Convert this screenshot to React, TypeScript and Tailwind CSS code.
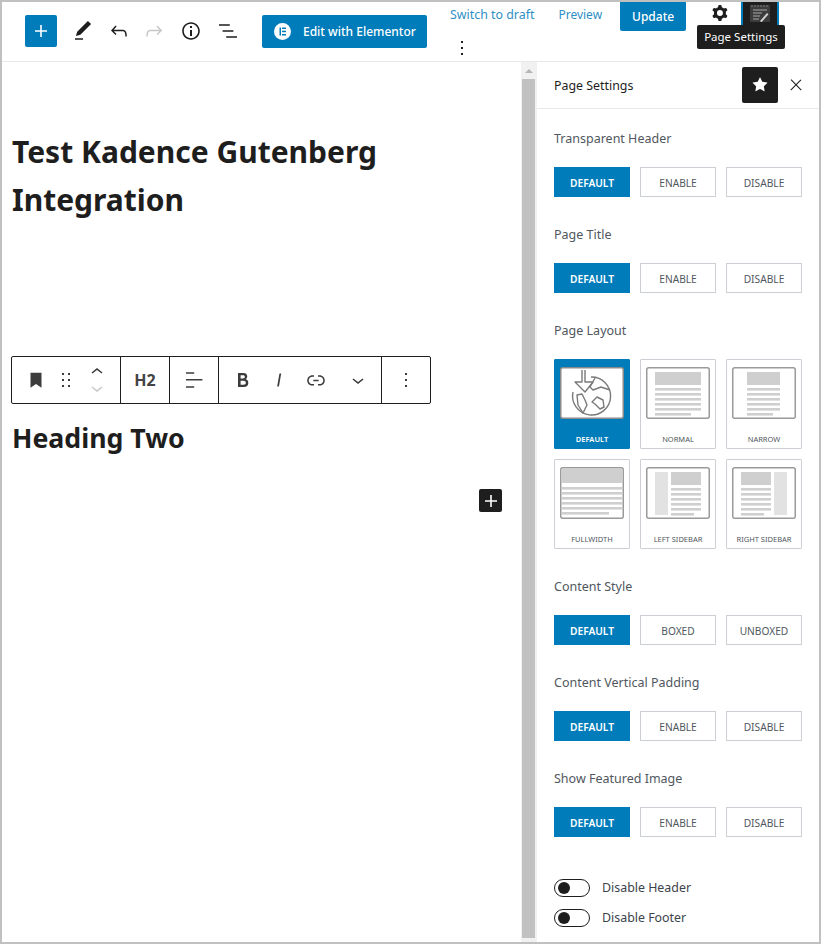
import React from 'react';

const icons = {
  plus: 'M18 11.2h-5.2V6h-1.6v5.2H6v1.6h5.2V18h1.6v-5.2H18z',
  edit: 'M20.1 5.1L16.9 2 6.2 12.7l-1.3 4.4 4.5-1.3L20.1 5.1zM4 20.8h8v-1.5H4v1.5z',
  undo: 'M18.3 11.7c-.6-.6-1.4-.9-2.3-.9H6.7l2.9-3.3-1.1-1-4.5 5L8.5 16l1-1-2.7-2.7H16c.5 0 .9.2 1.3.5 1 1 1 3.4 1 4.5v.3h1.5v-.2c0-1.5 0-4.3-1.5-5.7z',
  redo: 'M15.6 6.5l-1.1 1 2.9 3.3H8c-.9 0-1.7.3-2.3.9-1.4 1.5-1.4 4.2-1.4 5.6v.2h1.5v-.3c0-1.1 0-3.5 1-4.5.3-.3.7-.5 1.3-.5h9.2L14.5 15l1.1 1.1 4.6-4.6-4.6-5z',
  info: 'M12 3.2c-4.8 0-8.8 3.9-8.8 8.8 0 4.8 3.9 8.8 8.8 8.8 4.8 0 8.8-3.9 8.8-8.8 0-4.8-4-8.8-8.8-8.8zm0 16c-4 0-7.2-3.3-7.2-7.2C4.8 8 8 4.8 12 4.8s7.2 3.3 7.2 7.2c0 4-3.2 7.2-7.2 7.2zM11 17h2v-6h-2v6zm0-8h2V7h-2v2z',
  list: 'M13.8 5.2H3v1.5h10.8V5.2zm-3.6 12v1.5H21v-1.5H10.2zm7.2-6H6.6v1.5h10.8v-1.5z',
  more: 'M13 19h-2v-2h2v2zm0-6h-2v-2h2v2zm0-6h-2V5h2v2z',
  bookmark: 'M6 4h12v16.5l-6-4.2-6 4.2z',
  drag: 'M8 7h2V5H8v2zm0 6h2v-2H8v2zm0 6h2v-2H8v2zm6-14v2h2V5h-2zm0 8h2v-2h-2v2zm0 6h2v-2h-2v2z',
  up: 'M6.5 12.4L12 8l5.5 4.4-.9 1.2L12 10l-4.5 3.6-1-1.2z',
  down: 'M17.5 11.6L12 16l-5.5-4.4.9-1.2L12 14l4.5-3.6 1 1.2z',
  align: 'M4 19.8h8.2v-1.5H4v1.5zm0-15.6v1.5h8.2V4.2H4zm0 8.3h16.4V11H4z',
  bold: 'M14.7 11.3c1-.6 1.5-1.6 1.5-3 0-2.3-1.3-3.4-4-3.4H7v14h5.8c1.4 0 2.5-.3 3.3-1 .8-.7 1.2-1.7 1.2-2.9.1-1.9-.8-3.1-2.6-3.7zm-5.1-4h2.3c.6 0 1.1.1 1.4.4.3.3.5.7.5 1.2s-.2 1-.5 1.2c-.3.3-.8.4-1.4.4H9.6V7.3zm4.6 9c-.4.3-1 .4-1.7.4H9.6v-3.9h2.9c.7 0 1.3.2 1.7.5.4.3.6.8.6 1.5s-.2 1.2-.6 1.5z',
  italic: 'M12.5 5L10 19h1.9l2.5-14z',
  link: 'M15.6 7.2H14v1.5h1.6c2 0 3.7 1.7 3.7 3.7s-1.7 3.7-3.7 3.7H14v1.5h1.6c2.8 0 5.2-2.3 5.2-5.2 0-2.9-2.3-5.2-5.2-5.2zM4.7 12.4c0-2 1.7-3.7 3.7-3.7H10V7.2H8.4c-2.9 0-5.2 2.3-5.2 5.2 0 2.9 2.3 5.2 5.2 5.2H10v-1.5H8.4c-2 0-3.7-1.7-3.7-3.7zm4.6.9h5.3v-1.5H9.3v1.5z',
  close: 'M13 11.8l6.1-6.3-1-1-6.1 6.2-6.1-6.3-1 1 6.1 6.3-6.5 6.7 1 1 6.5-6.6 6.5 6.6 1-1z',
  star: 'M11.776 4.454a.25.25 0 01.448 0l2.069 4.192a.25.25 0 00.188.137l4.626.672a.25.25 0 01.139.426l-3.348 3.263a.25.25 0 00-.072.222l.79 4.607a.25.25 0 01-.362.263l-4.138-2.175a.25.25 0 00-.232 0l-4.138 2.175a.25.25 0 01-.363-.263l.79-4.607a.25.25 0 00-.071-.222L4.754 9.881a.25.25 0 01.139-.426l4.626-.672a.25.25 0 00.188-.137l2.069-4.192z',
  cog: 'M10.289 4.836A1 1 0 0111.275 4h1.306a1 1 0 01.987.836l.244 1.466c.787.26 1.503.679 2.108 1.218l1.393-.522a1 1 0 011.216.437l.653 1.13a1 1 0 01-.23 1.273l-1.148.944a6.025 6.025 0 010 2.435l1.149.946a1 1 0 01.23 1.272l-.653 1.13a1 1 0 01-1.216.437l-1.394-.522c-.605.54-1.32.958-2.108 1.218l-.244 1.466a1 1 0 01-.987.836h-1.306a1 1 0 01-.986-.836l-.244-1.466a5.995 5.995 0 01-2.108-1.218l-1.394.522a1 1 0 01-1.217-.436l-.653-1.131a1 1 0 01.23-1.272l1.149-.946a6.026 6.026 0 010-2.435l-1.148-.944a1 1 0 01-.23-1.272l.653-1.131a1 1 0 011.217-.437l1.393.522a5.994 5.994 0 012.108-1.218l.244-1.466zM14.929 12a3 3 0 11-6 0 3 3 0 016 0z',
};

function Icon({ d, className }: { d: string; className?: string }) {
  return (
    <svg viewBox="0 0 24 24" fill="currentColor" fillRule="evenodd" className={className}>
      <path d={d} />
    </svg>
  );
}

function SettingButtons({ labels }: { labels: string[] }) {
  return (
    <div className="mt-[18px] flex gap-[10px]">
      {labels.map((label, i) => (
        <div
          key={label}
          className={`flex h-[30px] w-[76px] items-center justify-center border pt-[3px] text-[10.2px] ${
            i === 0
              ? 'border-[#007cba] bg-[#007cba] font-semibold text-white'
              : 'border-[#ccd0d4] bg-white text-[#50575e]'
          }`}
        >
          {label}
        </div>
      ))}
    </div>
  );
}

function Section({ title, labels }: { title: string; labels: string[] }) {
  return (
    <div className="h-[96px]">
      <div className="h-[20px] text-[12.5px] leading-[20px] text-[#50575e]">{title}</div>
      <SettingButtons labels={labels} />
    </div>
  );
}

type LayoutKind = 'normal' | 'narrow' | 'fullwidth' | 'left' | 'right';

// little page wireframes used by the layout picker
function LayoutThumb({ kind }: { kind: LayoutKind }) {
  const lines = (x: number, w: number, y: number, last: number) =>
    [0, 1, 2, 3, 4, 5].map((i) => (
      <rect key={i} x={x} y={y + i * 5} width={i === 5 ? last : w} height={2.6} fill="#cfcfcf" />
    ));
  return (
    <svg viewBox="0 0 64 52" className="h-[52px] w-[64px]">
      <rect x="0.75" y="0.75" width="62.5" height="50.5" rx="2" fill="#fff" stroke="#9a9a9a" strokeWidth="1.5" />
      {kind === 'normal' && (
        <>
          <rect x="9" y="5" width="46" height="13" fill="#cfcfcf" />
          {lines(9, 46, 21, 36)}
        </>
      )}
      {kind === 'narrow' && (
        <>
          <rect x="15" y="5" width="33" height="13" fill="#cfcfcf" />
          {lines(15, 33, 21, 26)}
        </>
      )}
      {kind === 'fullwidth' && (
        <>
          <path d="M1.5 3a1.5 1.5 0 0 1 1.5-1.5h58a1.5 1.500 0 0 1 1.5 1.5v13h-61z" fill="#cfcfcf" />
          {lines(2, 60, 20, 47)}
        </>
      )}
      {kind === 'left' && (
        <>
          <rect x="9" y="5" width="13" height="43" fill="#e2e2e2" />
          <rect x="25" y="5" width="30" height="13" fill="#cfcfcf" />
          {lines(25, 30, 21, 23)}
        </>
      )}
      {kind === 'right' && (
        <>
          <rect x="42" y="5" width="13" height="43" fill="#e2e2e2" />
          <rect x="9" y="5" width="30" height="13" fill="#cfcfcf" />
          {lines(9, 30, 21, 23)}
        </>
      )}
    </svg>
  );
}

function DefaultThumb() {
  return (
    <svg viewBox="0 0 64 52" className="h-[52px] w-[64px]">
      <rect x="0.75" y="0.75" width="62.5" height="50.5" rx="2" fill="#fff" stroke="#8a8a8a" strokeWidth="1.5" />
      <g fill="none" stroke="#7a7a7a" strokeWidth="1.4" strokeLinejoin="round">
        <path d="M31 10A19 19 0 1 1 13 25" />
        <path d="M22 3v12h-7l10 10 8-10h-8V3" />
        <path d="M35 11l-5 9 3 3 8-3 9 3" />
        <path d="M32 35l5-5 6 3 1 7-4 2-5-5z" />
        <path d="M17 28l5-1 3 6 2 5-4 8-5-8z" />
      </g>
    </svg>
  );
}

function LayoutCard({ label, kind }: { label: string; kind: LayoutKind | 'default' }) {
  const active = kind === 'default';
  return (
    <div
      className={`flex h-[90px] w-[76px] flex-col items-center rounded-[1px] border pt-[7px] ${
        active ? 'border-[#007cba] bg-[#007cba] text-white' : 'border-[#ccd0d4] bg-white text-[#50575e]'
      }`}
    >
      {active ? <DefaultThumb /> : <LayoutThumb kind={kind as LayoutKind} />}
      <div className={`mt-[14px] whitespace-nowrap text-[7.5px] leading-[12px] ${active ? 'font-semibold' : ''}`}>{label}</div>
    </div>
  );
}

function Toggle({ label }: { label: string }) {
  return (
    <div className="flex h-[30px] items-center gap-[12px]">
      <div className="flex h-[18px] w-[36px] items-center rounded-full border border-[#1e1e1e] bg-white px-[3px]">
        <div className="h-[12px] w-[12px] rounded-full bg-[#1e1e1e]" />
      </div>
      <span className="text-[12.4px] text-[#3c434a]">{label}</span>
    </div>
  );
}

export default function App() {
  return (
    <div className="flex h-[944px] w-[821px] flex-col border-2 border-[#c0c0c0] bg-white font-['Noto_Sans',sans-serif] text-[#1e1e1e]">
      {/* Top bar */}
      <header className="relative flex h-[60px] shrink-0 border-b border-[#e8e8e8]">
        <div className="flex w-[436px] shrink-0 items-start pl-[23px] pt-[13px]">
          <div className="flex h-[32px] w-[32px] items-center justify-center rounded-[2px] bg-[#007cba] text-white">
            <Icon d={icons.plus} className="h-[24px] w-[24px]" />
          </div>
          <Icon d={icons.edit} className="ml-[14px] mt-[4px] h-[24px] w-[24px]" />
          <Icon d={icons.undo} className="ml-[12px] mt-[4px] h-[24px] w-[24px]" />
          <Icon d={icons.redo} className="ml-[11px] mt-[4px] h-[24px] w-[24px] text-[#c8c8c8]" />
          <Icon d={icons.info} className="ml-[13px] mt-[4px] h-[24px] w-[24px]" />
          <Icon d={icons.list} className="ml-[13px] mt-[4px] h-[24px] w-[24px]" />
          <div className="ml-[22px] flex h-[33px] w-[165px] items-center rounded-[2px] bg-[#007cba] pl-[12px] text-[12px] font-medium text-white">
            <span className="flex h-[17px] w-[17px] items-center justify-center rounded-full bg-white">
              <svg viewBox="0 0 17 17" className="h-[17px] w-[17px]">
                <rect x="5.500" y="4.500" width="1.500" height="8" fill="#007cba" />
                <rect x="8" y="4.500" width="4" height="1.500" fill="#007cba" />
                <rect x="8" y="7.700" width="4" height="1.500" fill="#007cba" />
                <rect x="8" y="11" width="4" height="1.500" fill="#007cba" />
              </svg>
            </span>
            <span className="ml-[12px] whitespace-nowrap">Edit with Elementor</span>
          </div>
        </div>
        <div className="flex flex-col">
          <div className="flex h-[29px] items-start">
            <span className="ml-[12px] mt-[4px] whitespace-nowrap text-[12.4px] leading-[18px] text-[#2f8fc4]">Switch to draft</span>
            <span className="ml-[24px] mt-[4px] whitespace-nowrap text-[12px] leading-[18px] text-[#2f8fc4]">Preview</span>
            <div className="ml-[18px] flex h-[29px] w-[66px] items-center justify-center rounded-b-[2px] bg-[#007cba] text-[12px] font-medium text-white">
              Update
            </div>
            <Icon d={icons.cog} className="ml-[22px] h-[24px] w-[24px] -translate-y-[1px]" />
            <div className="ml-[9px] flex h-[23px] w-[38px] justify-center border-x-[2px] border-[#007cba] bg-[#1e1e1e] pt-[3px]">
              <svg viewBox="0 0 20 17" className="h-[17px] w-[20px]">
                <rect width="20" height="17" fill="#3c3c3c" />
                <path d="M1 1h18" stroke="#777" strokeWidth="1" strokeDasharray="2 1" />
                <path d="M3 5h14M3 8h9M3 11h7M3 14h6" stroke="#a8a8a8" strokeWidth="1.200" />
                <path d="M10 16l7-8 1.500 1.300-7 8z" fill="#d0d0d0" />
              </svg>
            </div>
          </div>
          <Icon d={icons.more} className="ml-[12px] mt-[5px] h-[24px] w-[24px]" />
        </div>
        {/* tooltip */}
        <div className="absolute left-[695px] top-[23px] flex h-[24px] w-[88px] items-center justify-center rounded-[2px] bg-[#1e1e1e] text-[11.5px] text-white">
          Page Settings
        </div>
      </header>

      <div className="flex min-h-0 flex-1">
        {/* Editor canvas */}
        <main className="w-[519px] shrink-0 pl-[10px]">
          <h1 className="mt-[66px] w-[420px] text-[30px] font-bold leading-[48px] text-[#1e1e1e]">
            Test Kadence Gutenberg Integration
          </h1>
          <div className="ml-[-1px] mt-[132px] flex h-[48px] w-[420px] rounded-[2px] border border-[#1e1e1e] text-[#3c3c3c]">
            <div className="flex w-[109px] items-center border-r border-[#1e1e1e] pl-[13px]">
              <Icon d={icons.bookmark} className="h-[22px] w-[22px]" />
              <Icon d={icons.drag} className="ml-[7px] h-[24px] w-[24px]" />
              <div className="ml-[7px] flex flex-col">
                <Icon d={icons.up} className="-my-[4px] h-[24px] w-[24px]" />
                <Icon d={icons.down} className="-my-[4px] h-[24px] w-[24px] text-[#c8c8c8]" />
              </div>
            </div>
            <div className="flex w-[49px] items-center justify-center border-r border-[#1e1e1e] text-[16px] font-bold text-[#444]">H2</div>
            <div className="flex w-[49px] items-center justify-center border-r border-[#1e1e1e]">
              <Icon d={icons.align} className="h-[24px] w-[24px]" />
            </div>
            <div className="flex w-[163px] items-center border-r border-[#1e1e1e] pl-[12px]">
              <Icon d={icons.bold} className="h-[24px] w-[24px]" />
              <Icon d={icons.italic} className="ml-[13px] h-[22px] w-[22px]" />
              <Icon d={icons.link} className="ml-[14px] h-[24px] w-[24px]" />
              <Icon d={icons.down} className="ml-[18px] h-[24px] w-[24px]" />
            </div>
            <div className="flex flex-1 items-center justify-center">
              <Icon d={icons.more} className="h-[24px] w-[24px]" />
            </div>
          </div>
          <h2 className="mt-[14px] text-[26.7px] font-bold leading-[40px] text-[#1e1e1e]">Heading Two</h2>
          <div className="ml-[467px] mt-[31px] flex h-[23px] w-[23px] items-center justify-center rounded-[2px] bg-[#1e1e1e] text-white">
            <Icon d={icons.plus} className="h-[24px] w-[24px] shrink-0" />
          </div>
        </main>

        {/* Scrollbar */}
        <div className="flex w-[16px] shrink-0 flex-col bg-[#f1f1f1] px-[1px] pb-[4px]">
          <div className="flex h-[17px] shrink-0 items-center justify-center">
            <div className="h-0 w-0 border-x-[4px] border-b-[4px] border-x-transparent border-b-[#b5b5b5]" />
          </div>
          <div className="w-[13px] flex-1 bg-[#c1c1c1]" />
        </div>

        {/* Settings sidebar */}
        <aside className="flex-1 bg-white">
          <div className="flex h-[47px] items-center border-b border-[#e8e8e8] pl-[17px]">
            <span className="pt-[2px] text-[12.4px]">Page Settings</span>
            <div className="ml-[auto] flex h-[36px] w-[36px] items-center justify-center rounded-[2px] bg-[#1e1e1e] text-white">
              <Icon d={icons.star} className="h-[24px] w-[24px]" />
            </div>
            <Icon d={icons.close} className="ml-[9px] mr-[14px] h-[18px] w-[18px]" />
          </div>
          <div className="pl-[17px] pt-[20px]">
            <Section title="Transparent Header" labels={['DEFAULT', 'ENABLE', 'DISABLE']} />
            <Section title="Page Title" labels={['DEFAULT', 'ENABLE', 'DISABLE']} />
            <div className="h-[256px]">
              <div className="h-[20px] text-[12.5px] leading-[20px] text-[#50575e]">Page Layout</div>
              <div className="mt-[18px] grid grid-cols-[76px_76px_76px] gap-[10px]">
                <LayoutCard label="DEFAULT" kind="default" />
                <LayoutCard label="NORMAL" kind="normal" />
                <LayoutCard label="NARROW" kind="narrow" />
                <LayoutCard label="FULLWIDTH" kind="fullwidth" />
                <LayoutCard label="LEFT SIDEBAR" kind="left" />
                <LayoutCard label="RIGHT SIDEBAR" kind="right" />
              </div>
            </div>
            <Section title="Content Style" labels={['DEFAULT', 'BOXED', 'UNBOXED']} />
            <Section title="Content Vertical Padding" labels={['DEFAULT', 'ENABLE', 'DISABLE']} />
            <Section title="Show Featured Image" labels={['DEFAULT', 'ENABLE', 'DISABLE']} />
            <div className="mt-[8px]">
              <Toggle label="Disable Header" />
              <Toggle label="Disable Footer" />
            </div>
          </div>
        </aside>
      </div>
    </div>
  );
}
